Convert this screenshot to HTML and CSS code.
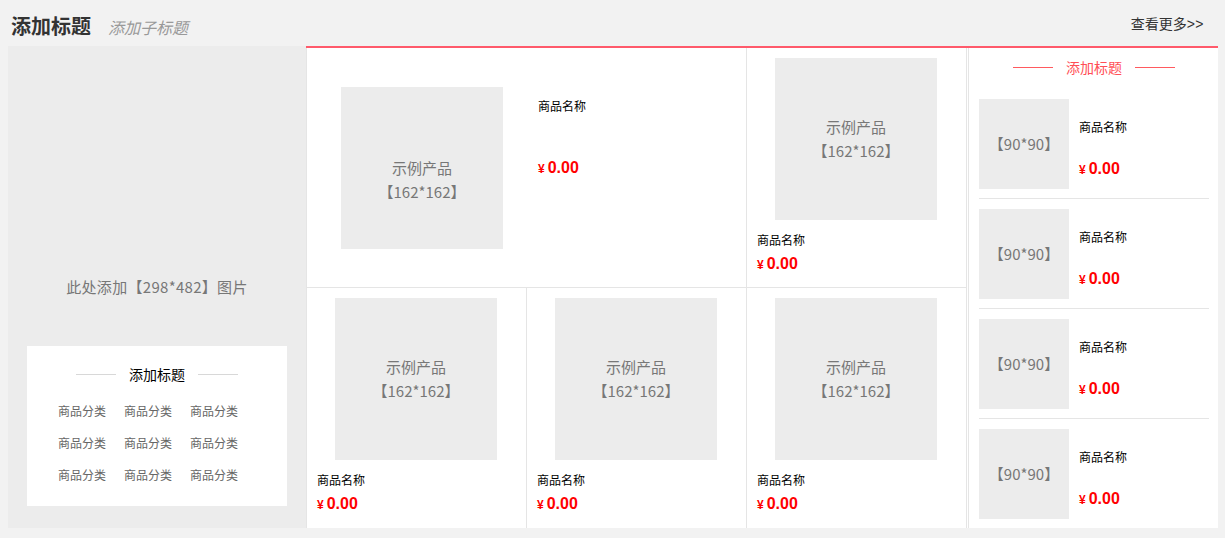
FILE: index.html
```html
<!DOCTYPE html>
<html lang="zh-CN">
<head>
<meta charset="utf-8">
<title>楼层</title>
<link rel="stylesheet" href="styles.css">
</head>
<body>
<div class="wrap">
  <div class="hd">
    <div class="hd-left">
      <h2 class="title">添加标题</h2>
      <span class="sub">添加子标题</span>
    </div>
    <a class="more" href="#">查看更多<span class="arrows">&gt;&gt;</span></a>
  </div>
  <div class="bd">
    <div class="banner">
      <div class="banner-text">此处添加【298*482】图片</div>
      <div class="cat-box">
        <div class="cat-title"><span class="line"></span><span>添加标题</span><span class="line"></span></div>
        <ul class="cat-list">
          <li>商品分类</li><li>商品分类</li><li>商品分类</li>
          <li>商品分类</li><li>商品分类</li><li>商品分类</li>
          <li>商品分类</li><li>商品分类</li><li>商品分类</li>
        </ul>
      </div>
    </div>
    <div class="main">
      <div class="grid">
        <div class="cell cell-big row1">
          <div class="ph ph-big">示例产品<br>【162*162】</div>
          <div class="info-big">
            <p class="name">商品名称</p>
            <p class="price price-big"><span class="yen">¥</span>0.00</p>
          </div>
        </div>
        <div class="cell row1">
          <div class="ph">示例产品<br>【162*162】</div>
          <p class="name name-s">商品名称</p>
          <p class="price price-s"><span class="yen">¥</span>0.00</p>
        </div>
        <div class="cell">
          <div class="ph">示例产品<br>【162*162】</div>
          <p class="name name-s">商品名称</p>
          <p class="price price-s"><span class="yen">¥</span>0.00</p>
        </div>
        <div class="cell">
          <div class="ph">示例产品<br>【162*162】</div>
          <p class="name name-s">商品名称</p>
          <p class="price price-s"><span class="yen">¥</span>0.00</p>
        </div>
        <div class="cell">
          <div class="ph">示例产品<br>【162*162】</div>
          <p class="name name-s">商品名称</p>
          <p class="price price-s"><span class="yen">¥</span>0.00</p>
        </div>
      </div>
      <div class="side">
        <div class="side-title"><span class="line line-red"></span><span>添加标题</span><span class="line line-red"></span></div>
        <div class="item">
          <div class="ph ph-s">【90*90】</div>
          <div class="item-info">
            <p class="name">商品名称</p>
            <p class="price price-item"><span class="yen">¥</span>0.00</p>
          </div>
        </div>
        <div class="item">
          <div class="ph ph-s">【90*90】</div>
          <div class="item-info">
            <p class="name">商品名称</p>
            <p class="price price-item"><span class="yen">¥</span>0.00</p>
          </div>
        </div>
        <div class="item">
          <div class="ph ph-s">【90*90】</div>
          <div class="item-info">
            <p class="name">商品名称</p>
            <p class="price price-item"><span class="yen">¥</span>0.00</p>
          </div>
        </div>
        <div class="item">
          <div class="ph ph-s">【90*90】</div>
          <div class="item-info">
            <p class="name">商品名称</p>
            <p class="price price-item"><span class="yen">¥</span>0.00</p>
          </div>
        </div>
      </div>
    </div>
  </div>
</div>
</body>
</html>
```

FILE: styles.css
```css
* { box-sizing: border-box; }

body {
  margin: 0;
  background: #f2f2f2;
  font-family: "Noto Sans CJK SC", "Noto Sans", sans-serif;
}

.wrap {
  width: 1210px;
  margin-left: 8px;
}

/* header */
.hd {
  height: 46px;
  display: flex;
  justify-content: space-between;
  align-items: center;
  padding-right: 14px;
}

.hd-left {
  display: flex;
  align-items: baseline;
  padding-left: 3px;
  padding-top: 6px;
}

.title {
  margin: 0;
  font-size: 20px;
  font-weight: bold;
  color: #333;
  line-height: 28px;
}

.sub {
  margin-left: 17px;
  font-size: 16px;
  font-style: italic;
  color: #999;
  line-height: 28px;
}

.more {
  font-size: 14px;
  line-height: 20px;
  color: #333;
  text-decoration: none;
}

.arrows {
  font-family: "Liberation Sans", Arial, sans-serif;
  letter-spacing: 0.5px;
}

/* body */
.bd {
  display: flex;
  height: 482px;
}

.banner {
  width: 298px;
  background: #ececec;
  position: relative;
  display: flex;
  align-items: center;
  justify-content: center;
}

.banner-text {
  font-size: 15px;
  line-height: 20px;
  color: #777;
  letter-spacing: 0.3px;
}

.cat-box {
  position: absolute;
  left: 19px;
  bottom: 22px;
  width: 260px;
  height: 160px;
  background: #fff;
  padding-top: 18px;
}

.cat-title,
.side-title {
  display: flex;
  justify-content: center;
  align-items: center;
  gap: 13px;
  font-size: 14px;
  line-height: 20px;
}

.cat-title { color: #000; }

.line {
  width: 40px;
  height: 1px;
  background: #d8d8d8;
}

.cat-list {
  list-style: none;
  margin: 17px auto 0;
  padding: 0;
  width: 198px;
  display: grid;
  grid-template-columns: repeat(3, 66px);
  row-gap: 12px;
  font-size: 12px;
  line-height: 20px;
  color: #666;
}

.main {
  flex: 1;
  display: flex;
  background: #fff;
  border-top: 2px solid #ff5a6b;
}

.grid {
  width: 662px;
  border-left: 1px solid #e5e5e5;
  display: grid;
  grid-template-columns: repeat(3, 220px);
  grid-template-rows: 240px 240px;
}

.cell {
  border-right: 1px solid #e5e5e5;
  padding: 10px;
  display: flex;
  flex-direction: column;
  align-items: flex-start;
}

.row1 { border-bottom: 1px solid #e5e5e5; }

.cell-big {
  grid-column: span 2;
  flex-direction: row;
  padding: 39px 0 0 34px;
}

.ph {
  width: 162px;
  height: 162px;
  flex: none;
  margin-left: 18px;
  background: #ececec;
  color: #777;
  font-size: 15px;
  line-height: 24px;
  text-align: center;
  display: flex;
  flex-direction: column;
  justify-content: center;
}

.ph-big {
  margin-left: 0;
  justify-content: flex-start;
  padding-top: 69px;
}

.info-big {
  margin-left: 35px;
  padding-top: 9px;
}

.name {
  margin: 0;
  font-size: 12px;
  line-height: 20px;
  color: #000;
}

.price {
  margin: 0;
  color: #f00;
  font-family: "Liberation Sans", Arial, sans-serif;
  font-weight: bold;
  font-size: 16px;
  line-height: 24px;
}

.yen {
  font-size: 12px;
  margin-right: 3px;
}

.price-big { margin-top: 40px; }
.name-s { margin-top: 10px; }
.price-s { margin-top: 2px; }

/* side */
.side {
  width: 250px;
  border-left: 1px solid #e5e5e5;
  padding: 0 9px 0 10px;
}

.side-title {
  height: 41px;
  padding-bottom: 3px;
  color: #ff4f56;
}

.line-red { background: #ff5a5f; }

.item {
  display: flex;
  padding: 10px 0 9px;
  border-bottom: 1px solid #e5e5e5;
}

.item:last-child { border-bottom: none; }

.ph-s {
  width: 90px;
  height: 90px;
  margin-left: 0;
  line-height: 20px;
}

.item-info {
  margin-left: 10px;
  padding-top: 18px;
}

.price-item { margin-top: 20px; }
```
